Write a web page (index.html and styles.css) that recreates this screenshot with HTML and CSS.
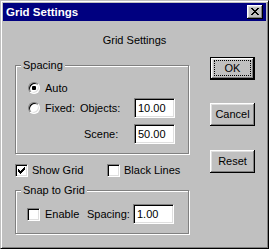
FILE: index.html
```html
<!DOCTYPE html>
<html>
<head>
<meta charset="utf-8">
<title>Grid Settings</title>
<link rel="stylesheet" href="styles.css">
</head>
<body>
<div class="window">
  <div class="titlebar">
    <span class="title">Grid Settings</span>
    <span class="close">
      <svg width="8" height="7" viewBox="0 0 8 7" shape-rendering="crispEdges"><path d="M0 0h2v1H0z M6 0h2v1H6z M1 1h2v1H1z M5 1h2v1H5z M2 2h4v1H2z M3 3h2v1H3z M2 4h4v1H2z M1 5h2v1H1z M5 5h2v1H5z M0 6h2v1H0z M6 6h2v1H6z" fill="#000"/></svg>
    </span>
  </div>
  <div class="client">
    <div class="heading">Grid Settings</div>
    <div class="main">
      <div class="left">
        <fieldset class="group">
          <legend>Spacing</legend>
          <div class="group-body spacing-body">
            <div class="row">
              <span class="opt"><span class="radio checked"></span>Auto</span>
            </div>
            <div class="row">
              <span class="opt col1"><span class="radio"></span>Fixed:</span>
              <span class="col2">Objects:</span>
              <span class="field">10.00</span>
            </div>
            <div class="row row-scene">
              <span class="col1"></span>
              <span class="col2 scene">Scene:</span>
              <span class="field">50.00</span>
            </div>
          </div>
        </fieldset>
        <div class="checks">
          <span class="opt show"><span class="check"><svg width="7" height="7" viewBox="0 0 7 7" shape-rendering="crispEdges"><path d="M6 0h1v3H6z M5 1h1v3H5z M4 2h1v3H4z M3 3h1v3H3z M2 4h1v3H2z M1 3h1v3H1z M0 2h1v3H0z" fill="#000"/></svg></span>Show Grid</span>
          <span class="opt"><span class="check"></span>Black Lines</span>
        </div>
        <fieldset class="group snap">
          <legend>Snap to Grid</legend>
          <div class="group-body snap-body">
            <div class="row">
              <span class="opt enable"><span class="check"></span>Enable</span>
              <span class="snap-label">Spacing:</span>
              <span class="field field-snap">1.00</span>
            </div>
          </div>
        </fieldset>
      </div>
      <div class="buttons">
        <span class="btn default"><span class="focus">OK</span></span>
        <span class="btn cancel">Cancel</span>
        <span class="btn reset">Reset</span>
      </div>
    </div>
  </div>
</div>
</body>
</html>
```

FILE: styles.css
```css
html, body {
  margin: 0;
  padding: 0;
  background: #c0c0c0;
}

body {
  font-family: "Liberation Sans", Arial, sans-serif;
  font-size: 11px;
  line-height: 13px;
  color: #000;
}

.window {
  box-sizing: border-box;
  width: 269px;
  height: 249px;
  background: #c0c0c0;
  border: 1px solid;
  border-color: #c0c0c0 #000 #000 #c0c0c0;
  box-shadow: inset 1px 1px #fff, inset -1px -1px #808080;
  padding: 2px;
}

.titlebar {
  height: 18px;
  background: #000080;
  display: flex;
  align-items: center;
  justify-content: space-between;
  padding-left: 3px;
}

.title {
  color: #fff;
  font-weight: bold;
  font-size: 11.5px;
}

.close {
  width: 16px;
  height: 14px;
  margin-right: 3px;
  box-sizing: border-box;
  background: #c0c0c0;
  box-shadow: inset -1px -1px #000, inset 1px 1px #fff, inset -2px -2px #808080, inset 2px 2px #dfdfdf;
  display: flex;
  align-items: center;
  justify-content: center;
  padding-bottom: 1px;
  padding-right: 1px;
}

.close svg {
  display: block;
}

.client {
  padding: 13px 0 0 12px;
}

.heading {
  text-align: center;
  margin-left: -12px;
  margin-bottom: 10px;
}

.main {
  display: flex;
  align-items: flex-start;
}

.left {
  width: 174px;
  padding-top: 2px;
}

.group {
  margin: 0;
  padding: 0;
  min-width: 0;
  border: 1px solid #808080;
  box-shadow: 1px 1px 0 #fff, inset 1px 1px 0 #fff;
}

.group legend {
  padding: 0 2px;
  margin-left: 5px;
  background: #c0c0c0;
  line-height: 13px;
}

.spacing-body {
  padding: 6px 0 9px 12px;
}

.row {
  display: flex;
  align-items: center;
  height: 20px;
}

.row-scene {
  margin-top: 6px;
}

.opt {
  display: flex;
  align-items: center;
}

.col1 {
  width: 52px;
  flex: none;
}

.col2 {
  width: 54px;
  flex: none;
}

.scene {
  box-sizing: border-box;
  padding-left: 4px;
}

.radio {
  box-sizing: border-box;
  width: 12px;
  height: 12px;
  border-radius: 50%;
  background: #fff;
  border: 1px solid;
  border-color: #808080 #fff #fff #808080;
  box-shadow: inset 1px 1px #000, inset -1px -1px #dfdfdf;
  margin-right: 5px;
  display: flex;
  align-items: center;
  justify-content: center;
  flex: none;
}

.radio.checked::after {
  content: "";
  width: 4px;
  height: 4px;
  border-radius: 1px;
  background: #000;
}

.check {
  box-sizing: border-box;
  width: 13px;
  height: 13px;
  background: #fff;
  border: 1px solid;
  border-color: #808080 #fff #fff #808080;
  box-shadow: inset 1px 1px #000, inset -1px -1px #dfdfdf;
  margin-right: 4px;
  display: flex;
  align-items: center;
  justify-content: center;
  flex: none;
}

.check svg {
  display: block;
}

.field {
  box-sizing: border-box;
  width: 41px;
  height: 20px;
  flex: none;
  background: #fff;
  border: 1px solid;
  border-color: #808080 #fff #fff #808080;
  box-shadow: inset 1px 1px #000, inset -1px -1px #dfdfdf;
  padding-left: 3px;
  display: flex;
  align-items: center;
}

.checks {
  display: flex;
  align-items: center;
  height: 13px;
  margin-top: 10px;
}

.show {
  width: 92px;
}

.snap {
  margin-top: 7px;
}

.snap-body {
  padding: 7px 0 9px 11px;
}

.enable {
  width: 60px;
  flex: none;
}

.enable .check {
  margin-right: 5px;
}

.snap-label {
  width: 46px;
  flex: none;
}

.buttons {
  margin-left: 21px;
  display: flex;
  flex-direction: column;
}

.btn {
  box-sizing: border-box;
  width: 45px;
  height: 23px;
  display: flex;
  align-items: center;
  justify-content: center;
  background: #c0c0c0;
  box-shadow: inset -1px -1px #000, inset 1px 1px #fff, inset -2px -2px #808080, inset 2px 2px #dfdfdf;
}

.btn.default {
  border: 1px solid #000;
  box-shadow: inset -1px -1px #000, inset 1px 1px #fff, inset -2px -2px #808080, inset 2px 2px #dfdfdf;
  padding: 2px 3px 3px 3px;
}

.focus {
  box-sizing: border-box;
  width: 100%;
  height: 100%;
  border: 1px dotted #000;
  display: flex;
  align-items: center;
  justify-content: center;
}

.cancel {
  margin-top: 23px;
}

.reset {
  margin-top: 24px;
}
```
